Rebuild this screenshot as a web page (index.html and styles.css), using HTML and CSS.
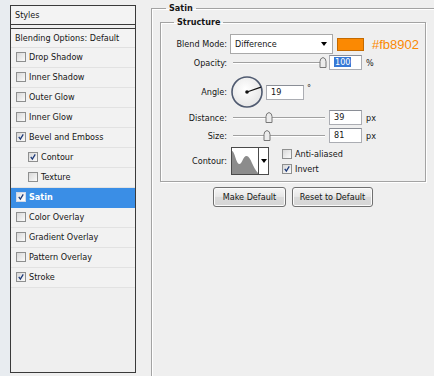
FILE: index.html
```html
<!DOCTYPE html>
<html>
<head>
<meta charset="utf-8">
<link rel="stylesheet" href="styles.css">
</head>
<body>
<div class="app">
  <aside class="side">
    <div class="list">
      <div class="list-head">Styles</div>
      <div class="list-blend">Blending Options: Default</div>
      <div class="item"><span class="cb"></span>Drop Shadow</div>
      <div class="item"><span class="cb"></span>Inner Shadow</div>
      <div class="item"><span class="cb"></span>Outer Glow</div>
      <div class="item"><span class="cb"></span>Inner Glow</div>
      <div class="item"><span class="cb"><svg viewBox="0 0 10 10"><path d="M2.2 4.8 L4.2 7.6 L7.8 1.8"/></svg></span>Bevel and Emboss</div>
      <div class="item sub"><span class="cb"><svg viewBox="0 0 10 10"><path d="M2.2 4.8 L4.2 7.6 L7.8 1.8"/></svg></span>Contour</div>
      <div class="item sub"><span class="cb"></span>Texture</div>
      <div class="item sel"><span class="cb"><svg viewBox="0 0 10 10"><path d="M2.2 4.8 L4.2 7.6 L7.8 1.8"/></svg></span>Satin</div>
      <div class="item"><span class="cb"></span>Color Overlay</div>
      <div class="item"><span class="cb"></span>Gradient Overlay</div>
      <div class="item"><span class="cb"></span>Pattern Overlay</div>
      <div class="item"><span class="cb"><svg viewBox="0 0 10 10"><path d="M2.2 4.8 L4.2 7.6 L7.8 1.8"/></svg></span>Stroke</div>
    </div>
  </aside>
  <main class="main">
    <fieldset class="grp satin">
      <legend class="lg-satin">Satin</legend>
      <fieldset class="grp structure">
        <legend class="lg-structure">Structure</legend>

        <div class="row r-blend">
          <span class="lbl">Blend Mode:</span>
          <div class="select"><span>Difference</span><span class="arrow"></span></div>
          <span class="swatch"></span>
          <span class="hex">#fb8902</span>
        </div>

        <div class="row r-opacity">
          <span class="lbl">Opacity:</span>
          <div class="slider"><span class="track"></span><svg class="thumb" style="left:86px" viewBox="0 0 8 11"><path d="M1 10.5 V4.5 Q1 1.2 4 0.5 Q7 1.2 7 4.5 V10.5 Z"/></svg></div>
          <span class="num"><span class="hl">100</span></span>
          <span class="unit">%</span>
        </div>

        <div class="row r-angle">
          <span class="lbl">Angle:</span>
          <svg class="dial" viewBox="0 0 32 32">
            <defs><radialGradient id="dg" cx="0.45" cy="0.4" r="0.6"><stop offset="0" stop-color="#ffffff"/><stop offset="1" stop-color="#e6e6e6"/></radialGradient></defs>
            <circle cx="16" cy="16" r="15" fill="url(#dg)" stroke="#4f5a70" stroke-width="1.6"/>
            <line x1="16" y1="16" x2="30" y2="11.2" stroke="#111" stroke-width="1.3"/>
            <circle cx="16" cy="16" r="1.8" fill="#111"/>
          </svg>
          <span class="num num-angle">19</span>
          <span class="deg">°</span>
        </div>

        <div class="row r-distance">
          <span class="lbl">Distance:</span>
          <div class="slider"><span class="track"></span><svg class="thumb" style="left:32px" viewBox="0 0 8 11"><path d="M1 10.5 V4.5 Q1 1.2 4 0.5 Q7 1.2 7 4.5 V10.5 Z"/></svg></div>
          <span class="num">39</span>
          <span class="unit">px</span>
        </div>

        <div class="row r-size">
          <span class="lbl">Size:</span>
          <div class="slider"><span class="track"></span><svg class="thumb" style="left:30px" viewBox="0 0 8 11"><path d="M1 10.5 V4.5 Q1 1.2 4 0.5 Q7 1.2 7 4.5 V10.5 Z"/></svg></div>
          <span class="num">81</span>
          <span class="unit">px</span>
        </div>

        <div class="row r-contour">
          <span class="lbl">Contour:</span>
          <div class="contour">
            <svg class="curve" viewBox="0 0 25 26" preserveAspectRatio="none">
              <path d="M0 3 C2.5 3 4 16 7 16 C10 16 10.5 8 14 8 C18 8 20 20 25 25 L25 26 L0 26 Z" fill="#8c8c8c"/>
            </svg>
            <span class="drop"><span class="arrow"></span></span>
          </div>
          <div class="checks">
            <div class="chk"><span class="cb"></span>Anti-aliased</div>
            <div class="chk"><span class="cb"><svg viewBox="0 0 10 10"><path d="M2.2 4.8 L4.2 7.6 L7.8 1.8"/></svg></span>Invert</div>
          </div>
        </div>
      </fieldset>

      <div class="buttons">
        <button class="btn btn-make">Make Default</button>
        <button class="btn btn-reset">Reset to Default</button>
      </div>
    </fieldset>
  </main>
</div>
</body>
</html>
```

FILE: styles.css
```css
* { box-sizing: border-box; }
html, body { margin: 0; padding: 0; }
body {
  width: 434px;
  height: 376px;
  overflow: hidden;
  background: #efefef;
  font-family: "DejaVu Sans Condensed", "DejaVu Sans", sans-serif;
  font-stretch: condensed;
  font-size: 9px;
  color: #151515;
}
.app { display: flex; height: 376px; }

/* left list */
.side {
  width: 151px;
  flex: none;
  padding: 5px 0 0 10px;
  background: linear-gradient(90deg, #e8ecf0 0, #e8ecf0 10px, #efefef 10px);
}
.list {
  width: 126px;
  height: 368px;
  border: 1px solid #3a3a3a;
  background: #efefef;
}
.list-head {
  height: 19px;
  line-height: 18px;
  padding-left: 4px;
  border-bottom: 1px solid #3a3a3a;
  background: #f3f3f3;
}
.list-blend {
  margin-top: 3px;
  height: 20px;
  line-height: 18px;
  padding-left: 4px;
  border-top: 1px solid #3a3a3a;
  border-bottom: 1px solid #e0e0e0;
  background: #f3f3f3;
}
.item {
  height: 20px;
  display: flex;
  align-items: center;
  padding: 0 0 1px 5px;
  border-bottom: 1px solid #e2e2e2;
  background: #f2f2f2;
}
.item.sub { padding-left: 17px; }
.item.sel { background: #3a8ee6; color: #fff; font-weight: bold; border-bottom-color: #3a8ee6; }

.cb {
  width: 10px;
  height: 10px;
  flex: none;
  margin-right: 3px;
  border: 1px solid #8e8f8f;
  background: linear-gradient(135deg, #d8d8d8, #fbfbfb);
  display: inline-flex;
}
.cb svg { width: 8px; height: 8px; }
.cb path { fill: none; stroke: #1d3a7a; stroke-width: 1.6; }
.item.sel .cb { border-color: #d0d8e8; background: linear-gradient(135deg, #e4e4e4, #ffffff); }

/* right side */
.main { flex: 1; min-width: 0; overflow: hidden; }
.grp {
  margin: 0;
  padding: 0;
  border: 1px solid #a3a3a3;
  box-shadow: 1px 1px 0 #ffffff, inset 1px 1px 0 #ffffff;
}
legend {
  padding: 0 3px;
  font-weight: bold;
  line-height: 12px;
  height: 12px;
}
.satin {
  margin-top: 2px;
  width: 283px;
  height: 374px;
  padding-left: 8px;
  border-right: none;
  border-bottom: none;
}
.lg-satin { margin-left: 6px; }
.structure {
  margin-top: 2px;
  width: 266px;
  padding-bottom: 6px;
}
.lg-structure { margin-left: 13px; }

.row { display: flex; align-items: center; }
.lbl { width: 66px; flex: none; text-align: right; }
.r-blend { margin-top: 6px; height: 20px; }
.r-opacity { margin-top: 1px; height: 15px; }
.r-angle { margin-top: 6px; height: 32px; }
.r-distance { margin-top: 2px; height: 15px; }
.r-size { margin-top: 3px; height: 15px; }
.r-contour { margin-top: 4px; height: 28px; }

.select {
  margin-left: 3px;
  width: 103px;
  height: 20px;
  border: 1px solid #a9a9a9;
  background: #fff;
  padding: 0 5px 0 4px;
  display: flex;
  align-items: center;
  justify-content: space-between;
}
.arrow {
  width: 0;
  height: 0;
  border-top: 4px solid #000;
  border-left: 3px solid transparent;
  border-right: 3px solid transparent;
}
.swatch {
  margin-left: 4px;
  width: 27px;
  height: 13px;
  background: #fb8902;
  border: 1px solid #c46a00;
}
.hex {
  margin-left: 8px;
  color: #fb8902;
  font-family: "Liberation Sans", Arial, sans-serif;
  font-size: 13px;
}

.slider {
  margin-left: 6px;
  width: 92px;
  height: 15px;
  position: relative;
  flex: none;
}
.track {
  display: block;
  margin-top: 7px;
  height: 2px;
  border-top: 1px solid #a0a0a0;
  border-bottom: 1px solid #ffffff;
}
.thumb {
  position: absolute;
  top: 2px;
  width: 8px;
  height: 11px;
}
.thumb path { fill: #ececec; stroke: #777; stroke-width: 1; }

.num {
  margin-left: 4px;
  width: 33px;
  height: 15px;
  flex: none;
  border: 1px solid #abadb3;
  border-top-color: #8a8e96;
  background: #fff;
  padding-left: 4px;
  line-height: 13px;
}
.hl { background: #3779d6; color: #fff; padding: 0 1px; }
.unit { margin-left: 4px; }

.dial { margin-left: 4px; width: 32px; height: 32px; flex: none; }
.num-angle { margin-left: 3px; width: 38px; }
.deg { margin-left: 3px; align-self: flex-start; margin-top: 7px; }

.contour {
  margin-left: 4px;
  width: 38px;
  height: 28px;
  flex: none;
  border: 1px solid #4a4a4a;
  background: #fff;
  display: flex;
}
.curve { width: 26px; height: 26px; display: block; }
.drop {
  flex: 1;
  border-left: 1px solid #4a4a4a;
  display: flex;
  align-items: center;
  justify-content: center;
}
.checks {
  margin-left: 13px;
  display: flex;
  flex-direction: column;
  gap: 5px;
}
.chk { display: flex; align-items: center; height: 10px; }

.buttons {
  width: 266px;
  margin-top: 5px;
  display: flex;
  justify-content: center;
  gap: 6px;
}
.btn {
  height: 20px;
  padding: 0;
  font: inherit;
  color: #151515;
  border: 1px solid #707070;
  border-radius: 3px;
  background: linear-gradient(#f6f6f6, #e6e6e6 50%, #dadada 51%, #d6d6d6);
  box-shadow: inset 0 0 0 1px #fbfbfb;
}
.btn-make { width: 73px; }
.btn-reset { width: 81px; }
```
